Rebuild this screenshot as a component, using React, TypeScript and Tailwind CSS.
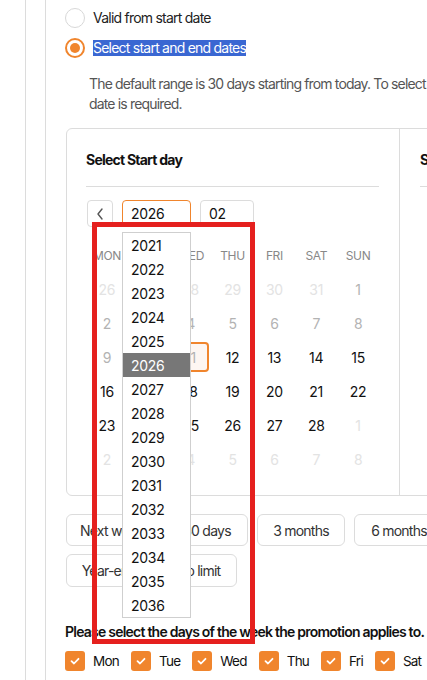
import React from "react";

type Cell = { d: number; k: "out" | "dis" | "act" | "today" };

const rows: Cell[][] = [
  [26, 27, 28, 29, 30, 31].map((d) => ({ d, k: "out" as const })).concat([{ d: 1, k: "dis" }]),
  [2, 3, 4, 5, 6, 7, 8].map((d) => ({ d, k: "dis" as const })),
  [
    { d: 9, k: "dis" },
    { d: 10, k: "dis" },
    { d: 11, k: "today" },
    { d: 12, k: "act" },
    { d: 13, k: "act" },
    { d: 14, k: "act" },
    { d: 15, k: "act" },
  ],
  [16, 17, 18, 19, 20, 21, 22].map((d) => ({ d, k: "act" as const })),
  [23, 24, 25, 26, 27, 28].map((d) => ({ d, k: "act" as const })).concat([{ d: 1, k: "out" }]),
  [2, 3, 4, 5, 6, 7, 8].map((d) => ({ d, k: "out" as const })),
];

const years = Array.from({ length: 16 }, (_, i) => 2021 + i);
const weekdays = ["MON", "TUE", "WED", "THU", "FRI", "SAT", "SUN"];
const days = ["Mon", "Tue", "Wed", "Thu", "Fri", "Sat", "Sun"];

function cellClass(k: Cell["k"]) {
  if (k === "out") return "text-[#e3e3e3]";
  if (k === "dis") return "text-[#b3b3b3]";
  if (k === "today") return "text-[#b3b3b3]";
  return "text-[#111]";
}

function Check() {
  return (
    <span className="w-[20px] h-[20px] rounded-[3px] bg-[#f0852d] flex items-center justify-center shrink-0">
      <svg width="12" height="12" viewBox="0 0 12 12" fill="none">
        <path d="M2.5 6.2 L5 8.5 L9.5 3.8" stroke="white" strokeWidth="1.8" strokeLinecap="round" strokeLinejoin="round" />
      </svg>
    </span>
  );
}

const row1 = [
  { t: "Next week", w: "w-[91px]" },
  { t: "30 days", w: "w-[82px]" },
  { t: "3 months", w: "w-[88px]" },
  { t: "6 months", w: "w-[90px]" },
  { t: "1 year", w: "w-[74px]" },
];
const row2 = [
  { t: "Year-end", w: "w-[86px]" },
  { t: "No limit", w: "w-[77px]" },
];

export default function App() {
  return (
    <div
      className="relative w-[427px] h-[680px] overflow-hidden bg-white flex text-[14px] tracking-[-0.055em] text-[#222]"
      style={{ fontFamily: "Inter, 'Noto Sans', sans-serif" }}
    >
      <div className="w-[25px] shrink-0" />
      <div className="w-[20px] shrink-0 border-l border-[#dcdcdc]" />
      <div className="shrink-0 w-[800px] border-l border-[#dcdcdc] pl-[19px] pt-[8px]">
        {/* radios */}
        <div className="flex items-center h-[20px] gap-[8px]">
          <span className="w-[20px] h-[20px] rounded-full border border-[#d8d8d8] bg-white" />
          <span className="leading-[20px]">Valid from start date</span>
        </div>
        <div className="flex items-center h-[20px] gap-[8px] mt-[10px]">
          <span className="w-[20px] h-[20px] rounded-full border-2 border-[#f0852d] flex items-center justify-center">
            <span className="w-[10px] h-[10px] rounded-full bg-[#f0852d]" />
          </span>
          <span className="leading-[16px] bg-[#3a67d2] text-white">Select start and end dates</span>
        </div>
        <p className="pl-[24px] mt-[16px] leading-[20px] text-[#555] tracking-[-0.06em]">
          The default range is 30 days starting from today. To select a different period, an end
          <br />
          date is required.
        </p>

        {/* calendar card */}
        <div className="mt-[14px] ml-[1px] border border-[#dcdcdc] rounded-[6px] flex w-[700px]">
          <div className="w-[333px] shrink-0 border-r border-[#dcdcdc] pl-[19px] pr-[20px] pt-[21px] pb-[19px]">
            <div className="pb-[16px] border-b border-[#dcdcdc] text-[14px] font-bold leading-[20px] text-[#111]">
              Select Start day
            </div>
            <div className="relative flex items-center gap-[9px] mt-[13px] h-[27px]">
              <button className="w-[26px] h-[27px] ml-[1px] border border-[#dcdcdc] rounded-[4px] flex items-center justify-center text-[#555]">
                <svg width="10" height="14" viewBox="0 0 10 14" fill="none">
                  <path d="M7 2 L3 7 L7 12" stroke="#555" strokeWidth="1.4" strokeLinecap="round" strokeLinejoin="round" />
                </svg>
              </button>
              <div className="relative w-[69px] h-[27px] border border-[#f0852d] rounded-[4px] pl-[8px] flex items-center text-[#111] tracking-[-0.02em]">
                2026
                <div className="absolute left-[-1px] top-[31px] w-[69px] border border-[#cfcfcf] bg-white z-10">
                  {years.map((y) => (
                    <div
                      key={y}
                      className={
                        y === 2026
                          ? "h-[24px] pl-[8px] flex items-center bg-[#777] text-white"
                          : "h-[24px] pl-[8px] flex items-center text-[#111]"
                      }
                    >
                      {y}
                    </div>
                  ))}
                </div>
              </div>
              <div className="w-[54px] h-[27px] border border-[#dcdcdc] rounded-[4px] pl-[8px] flex items-center text-[#111] tracking-[-0.02em]">
                02
              </div>
            </div>
            <div className="grid grid-cols-7 mt-[17px] h-[24px] items-center text-center text-[12px] text-[#888] tracking-[-0.03em]">
              {weekdays.map((w) => (
                <span key={w}>{w}</span>
              ))}
            </div>
            <div className="mt-[4px] tracking-[-0.02em]">
              {rows.map((r, i) => (
                <div key={i} className="grid grid-cols-7 h-[34px] items-center text-center">
                  {r.map((c, j) => (
                    <div key={j} className="flex justify-center">
                      {c.k === "today" ? (
                        <span className="w-[36px] h-[30px] border-2 border-[#f0852d] rounded-[4px] bg-[#fdf6f2] flex items-center justify-center text-[#b3b3b3]">
                          {c.d}
                        </span>
                      ) : (
                        <span className={cellClass(c.k)}>{c.d}</span>
                      )}
                    </div>
                  ))}
                </div>
              ))}
            </div>
          </div>
          <div className="flex-1 pl-[20px] pr-[20px] pt-[21px]">
            <div className="pb-[16px] border-b border-[#dcdcdc] text-[14px] font-bold leading-[20px] text-[#111]">
              Select End day
            </div>
          </div>
        </div>

        {/* presets */}
        <div className="mt-[18px] ml-[1px] flex gap-[9px]">
          {row1.map((b) => (
            <button key={b.t} className={`${b.w} h-[32px] flex items-center justify-center border border-[#dcdcdc] rounded-[6px] text-[#333] whitespace-nowrap`}>
              {b.t}
            </button>
          ))}
        </div>
        <div className="mt-[8px] ml-[1px] flex gap-[8px]">
          {row2.map((b) => (
            <button key={b.t} className={`${b.w} h-[33px] flex items-center justify-center border border-[#dcdcdc] rounded-[6px] text-[#333] whitespace-nowrap`}>
              {b.t}
            </button>
          ))}
        </div>

        <div className="mt-[35px] font-semibold leading-[20px] text-[#111]">
          Please select the days of the week the promotion applies to.
        </div>
        <div className="mt-[9px] flex items-center gap-[12px]">
          {days.map((d) => (
            <label key={d} className="flex items-center gap-[8px] text-[13.5px] text-[#111]">
              <Check />
              <span>{d}</span>
            </label>
          ))}
        </div>
      </div>

      {/* red highlight box */}
      <div className="absolute left-[92px] top-[222px] w-[163px] h-[422px] border-[5px] border-[#e5201e] pointer-events-none z-20" />
    </div>
  );
}
